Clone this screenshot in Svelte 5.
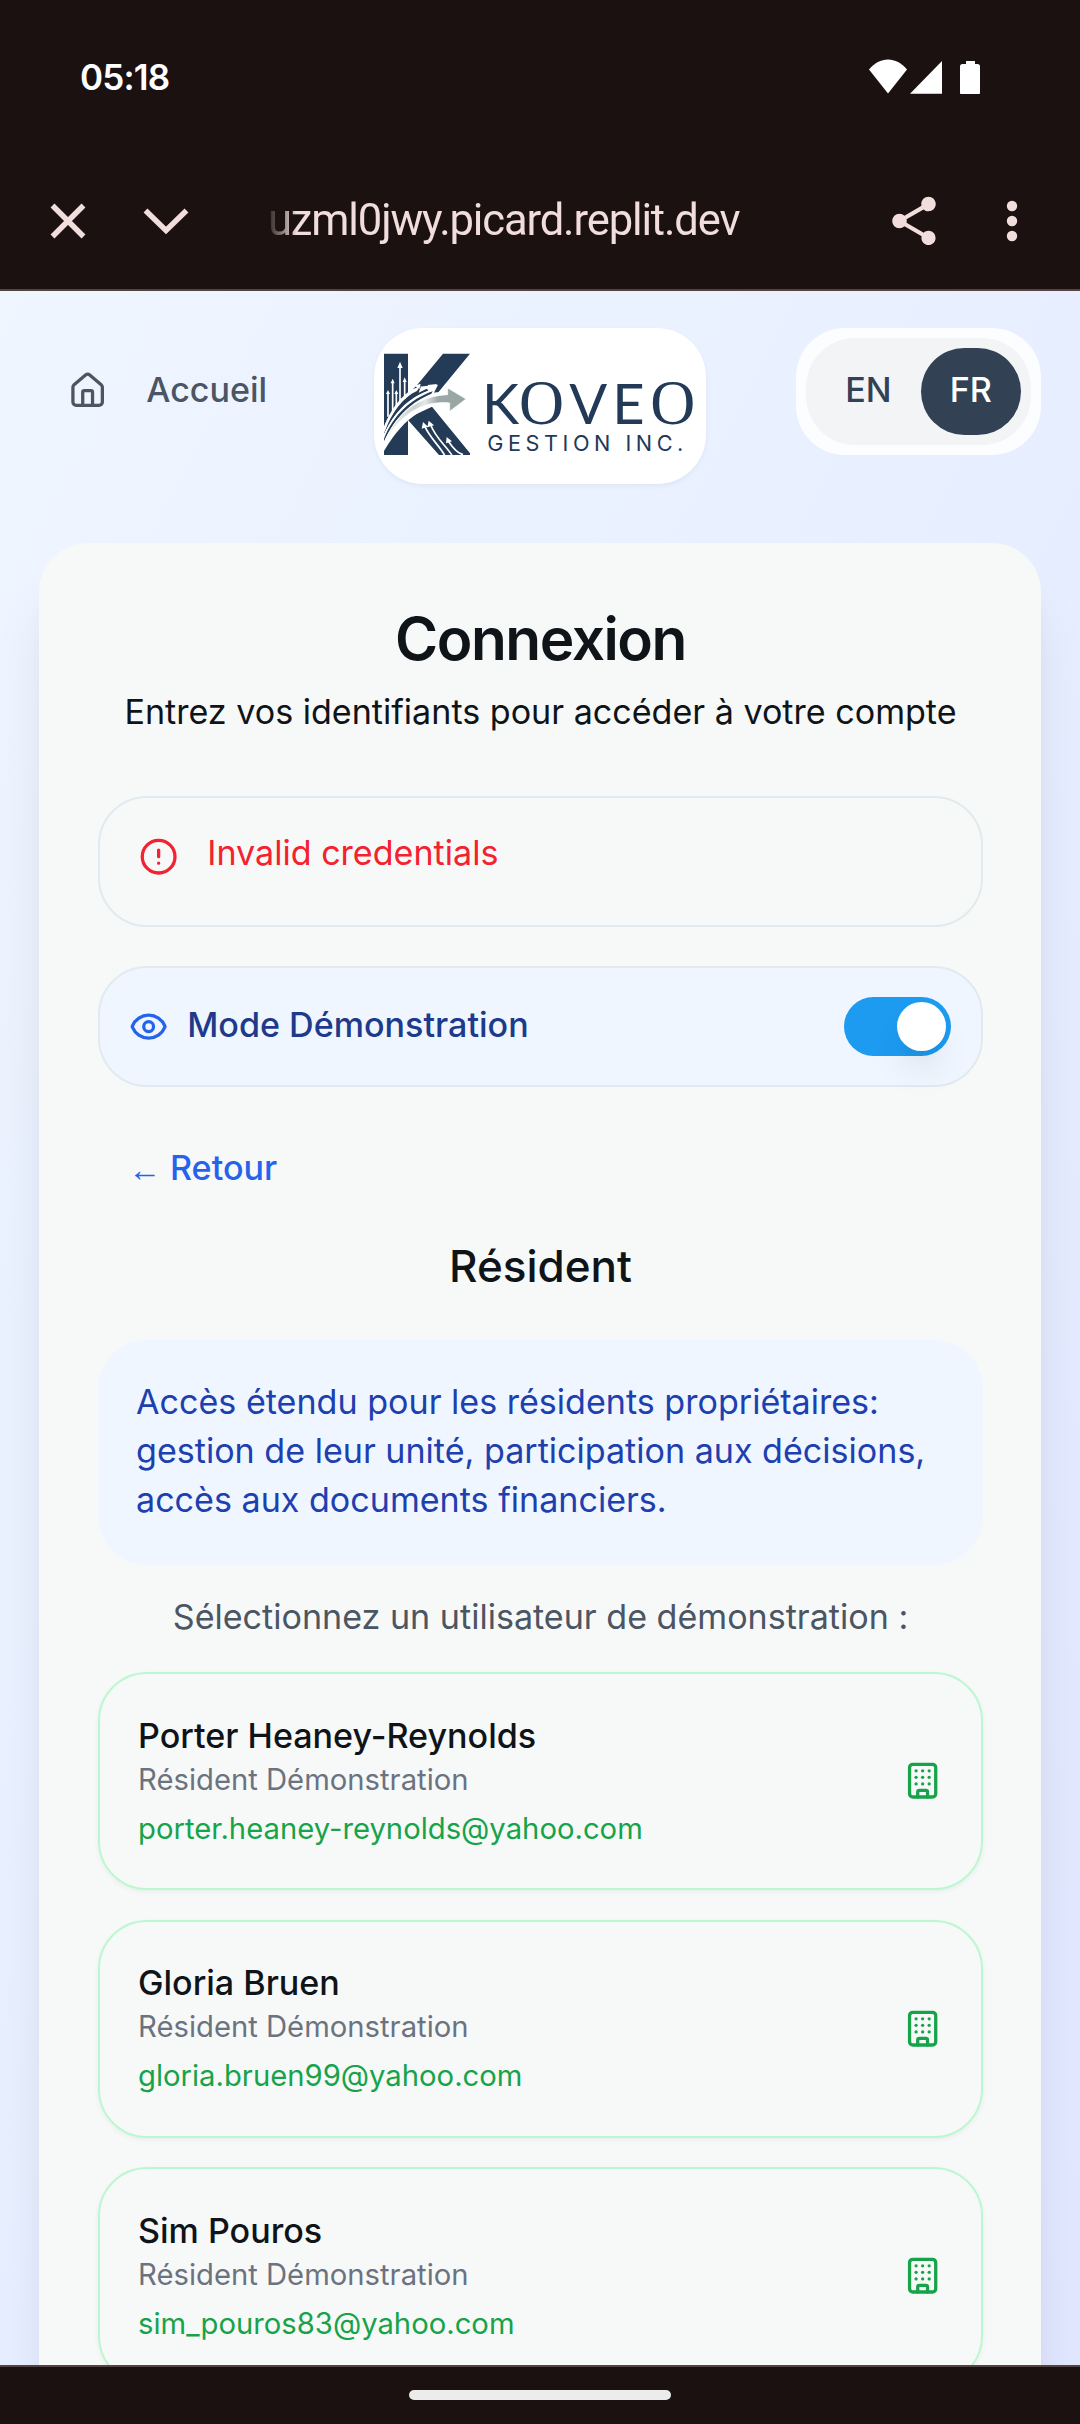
<script>
  const users = [
    { name: 'Porter Heaney-Reynolds', email: 'porter.heaney-reynolds@yahoo.com' },
    { name: 'Gloria Bruen', email: 'gloria.bruen99@yahoo.com' },
    { name: 'Sim Pouros', email: 'sim_pouros83@yahoo.com' }
  ];
  const windows = [6, 10, 14].flatMap((y) => [8, 12, 16].map((x) => ({ x, y })));
</script>

<div class="screen">
  <div class="chrome">
    <div class="status">
      <span class="time">05:18</span>
      <svg class="indicators" viewBox="868 58 114 37" width="114" height="37">
        <path d="M869 70.5C879.5 57 896.500 57 907 70.500L888 94.400Z" />
        <path d="M910 94.700H942V62Z" />
        <path d="M966 62h9v3h2.500a2.500 2.500 0 0 1 2.500 2.500V93.500a2.500 2.500 0 0 1-2.500 2.500h-15a2.500 2.500 0 0 1-2.500-2.500V67.500a2.500 2.500 0 0 1 2.500-2.500h3.500z" />
      </svg>
    </div>
    <div class="toolbar">
      <svg class="close" viewBox="0 0 36 36" width="36" height="36"><path d="M2.500 2.500l31 31M33.500 2.500l-31 31" /></svg>
      <svg class="chev" viewBox="0 0 46 28" width="46" height="28"><path d="M2.500 3.500L23 23.500L43.500 3.500" /></svg>
      <div class="url"><span>uzml0jwy.picard.replit.dev</span></div>
      <svg class="share" viewBox="0 0 24 24" width="58" height="58">
        <path d="M18 16.080c-.76 0-1.440.3-1.960.77L8.910 12.700c.05-.23.09-.46.09-.7s-.04-.47-.09-.7l7.050-4.110c.54.5 1.250.81 2.040.81 1.660 0 3-1.340 3-3s-1.340-3-3-3-3 1.340-3 3c0 .24.04.47.09.7L8.040 9.810C7.500 9.310 6.790 9 6 9c-1.660 0-3 1.340-3 3s1.340 3 3 3c.79 0 1.500-.31 2.040-.81l7.120 4.160c-.05.21-.08.43-.08.65 0 1.610 1.310 2.920 2.920 2.920s2.920-1.310 2.920-2.920-1.310-2.920-2.920-2.920z" />
      </svg>
      <svg class="more" viewBox="0 0 12 42" width="12" height="42">
        <circle cx="6" cy="6" r="5.200" /><circle cx="6" cy="21" r="5.200" /><circle cx="6" cy="36" r="5.200" />
      </svg>
    </div>
  </div>

  <main class="page">
    <header>
      <a class="home" href="#home">
        <svg class="icon" viewBox="0 0 24 24">
          <path d="M15 21v-8a1 1 0 0 0-1-1h-4a1 1 0 0 0-1 1v8" />
          <path d="M3 10a2 2 0 0 1 .709-1.528l7-5.999a2 2 0 0 1 2.582 0l7 5.999A2 2 0 0 1 21 10v9a2 2 0 0 1-2 2H5a2 2 0 0 1-2-2z" />
        </svg>
        <span>Accueil</span>
      </a>

      <div class="logo">
        <svg viewBox="42 54 996 468" width="332" height="156">
          <defs>
            <linearGradient id="silver" x1="0" x2="1" y1="0" y2="0">
              <stop offset="0" stop-color="#f1f5f4" />
              <stop offset=".38" stop-color="#c9d3d1" />
              <stop offset=".5" stop-color="#e4e9e8" />
              <stop offset=".66" stop-color="#9aa8a6" />
              <stop offset="1" stop-color="#97a5a3" />
            </linearGradient>
            <clipPath id="mark"><rect x="18" y="20" width="262" height="307" /></clipPath>
          </defs>
          <g transform="translate(54 108)" clip-path="url(#mark)">
            <path class="navy" d="M18 23H90V327H18Z" />
            <path class="navy" d="M195 23H276L170 152L118 160L90 145L118 116Z" />
            <path class="navy" d="M85 218L162 182L276 322V327H183L90 222Z" />
            <path class="white" d="M14 252C35 195 70 140 122 122L180 116L168 140C190 136 205 142 216 148L214 170C150 176 80 205 14 322Z" />
            <path class="navy" d="M18 262C35 205 70 155 118 134L122 118L128 124L122 140L146 128L152 134C100 152 50 190 18 268Z" />
            <path class="navy" d="M18 278C45 210 95 160 164 136L160 143C105 166 55 206 18 286Z" />
            <path class="hair" d="M18 256C38 202 70 155 120 128M18 268C45 206 90 160 158 132" />
            <path class="silver" d="M18 292C55 200 120 150 209 146V126L264 159L215 196V171C135 162 65 205 18 292Z" />
            <path class="stroke" d="M30 212V142M44 195V108M55 180V142M66 172V60M80 158V104" />
            <path class="white" d="M24 144L30 132L36 144ZM38 112L44 98L50 112ZM49 144L55 132L61 144ZM58 66L66 47L74 66ZM74 108L80 94L86 108ZM110 119L128 113L124 130ZM149 117L177 114L158 138Z" />
            <path class="stroke" d="M139 238C155 275 185 300 200 328M158 236C172 275 205 300 222 328M210 284C224 305 240 322 255 326" />
            <path class="white" d="M131 248L135 228L150 242ZM148 244L152 224L168 238ZM204 292L206 273L222 286Z" />
          </g>
          <text class="brand" x="366 477 628 757 871" y="342">K<tspan class="round">O</tspan>VE<tspan class="round">O</tspan></text>
          <text class="tagline" x="382" y="423" textLength="588" lengthAdjust="spacing">GESTION INC.</text>
        </svg>
      </div>

      <div class="lang">
        <div class="options">
          <button>EN</button>
          <button class="active">FR</button>
        </div>
      </div>
    </header>

    <section class="card">
      <h1>Connexion</h1>
      <p class="subtitle">Entrez vos identifiants pour accéder à votre compte</p>

      <div class="alert">
        <svg class="icon" viewBox="0 0 24 24"><circle cx="12" cy="12" r="10" /><path d="M12 8v4M12 16h.01" /></svg>
        <span>Invalid credentials</span>
      </div>

      <div class="mode">
        <svg class="icon" viewBox="0 0 24 24">
          <path d="M2.062 12.348a1 1 0 0 1 0-.696 10.750 10.750 0 0 1 19.876 0 1 1 0 0 1 0 .696 10.750 10.750 0 0 1-19.876 0" />
          <circle cx="12" cy="12" r="3" />
        </svg>
        <span>Mode Démonstration</span>
        <div class="switch"><div class="knob"></div></div>
      </div>

      <button class="back"><span class="arrow">←</span><span>Retour</span></button>

      <h2>Résident</h2>
      <p class="info">Accès étendu pour les résidents propriétaires: gestion de leur unité, participation aux décisions, accès aux documents financiers.</p>
      <p class="prompt">Sélectionnez un utilisateur de démonstration :</p>

      <div class="users">
        {#each users as user}
          <div class="user">
            <div class="details">
              <div class="name">{user.name}</div>
              <div class="role">Résident Démonstration</div>
              <div class="email">{user.email}</div>
            </div>
            <svg class="icon" viewBox="0 0 24 24">
              <rect x="4" y="2" width="16" height="20" rx="2" />
              <path d="M9 22v-3a1 1 0 0 1 1-1h4a1 1 0 0 1 1 1v3" />
              {#each windows as w}<path d="M{w.x} {w.y}h.01" />{/each}
            </svg>
          </div>
        {/each}
      </div>
    </section>
  </main>

  <footer><div class="handle"></div></footer>
</div>

<style>
  :global(body) { margin: 0; }
  .screen, .screen * { box-sizing: border-box; }
  .screen {
    width: 1080px; height: 2424px; display: flex; flex-direction: column; overflow: hidden;
    font-family: Inter, "Liberation Sans", sans-serif; font-size: 34.1px; line-height: 49px; color: #0f1419;
  }
  svg { display: block; flex: none; }
  h1, h2, p { margin: 0; }
  button { font: inherit; border: 0; background: none; padding: 0; }

  .chrome { height: 291px; flex: none; background: #1b1110; border-bottom: 2px solid #534342; }
  .status { height: 152px; padding: 0 98px 0 80px; display: flex; justify-content: space-between; align-items: center; }
  .time { color: #fff; font-size: 35px; font-weight: 600; line-height: 40px; letter-spacing: -0.8px; margin-top: 2px; }
  .indicators { fill: #fff; margin-top: -2px; }
  .toolbar { height: 137px; padding-left: 50px; display: flex; align-items: center; color: #f1dedc; }
  .close, .chev { fill: none; stroke: currentColor; stroke-width: 5.5; }
  .chev { margin-left: 57px; }
  .url {
    width: 480px; margin-left: 76px; padding-left: 3px; font-family: Roboto, sans-serif; font-size: 43.5px; line-height: 60px; white-space: nowrap;
    mask-image: linear-gradient(to right, transparent 0, #000 32px);
  }
  .url span { letter-spacing: -1.12px; }
  .share { margin-left: 140px; fill: currentColor; }
  .more { margin-left: 63px; fill: currentColor; }

  .page { flex: 1; min-height: 0; overflow: hidden; padding: 37px 39px 0; background: linear-gradient(to bottom right, #eff6ff, #e0e7ff); }
  header { display: grid; grid-template-columns: 1fr auto 1fr; align-items: start; height: 215px; }
  .icon { width: 39.27px; height: 39.27px; fill: none; stroke: currentColor; stroke-width: 2; stroke-linecap: round; stroke-linejoin: round; }
  .home { display: flex; align-items: center; gap: 39px; margin-top: 37px; padding-left: 29px; color: #4b5563; font-weight: 500; text-decoration: none; }
  .home .icon { margin-top: 2px; }
  .logo { width: 332px; height: 156px; border-radius: 49px; background: #fff; overflow: hidden; box-shadow: 0 2px 5px rgba(0, 0, 0, .05); }
  .navy { fill: #243b57; }
  .white { fill: #fff; }
  .silver { fill: url(#silver); stroke: #fff; stroke-width: 2; }
  .hair { fill: none; stroke: #fff; stroke-width: 4; }
  .stroke { fill: none; stroke: #fff; stroke-width: 5; }
  .brand { font-family: Lato, sans-serif; font-size: 168px; fill: #223a57; }
  .round { font-family: "Liberation Serif", serif; font-size: 187px; }
  .tagline { font-size: 65px; font-weight: 400; fill: #223a57; }
  .lang { justify-self: end; width: 245px; height: 127px; padding: 10px; border-radius: 49px; background: rgba(255, 255, 255, .85); }
  .options { display: flex; height: 107px; padding: 10px; border-radius: 49px; background: #f3f4f6; }
  .options button { width: 105.500px; height: 87px; padding-bottom: 4px; border-radius: 49px; font-weight: 500; color: #334155; }
  .options .active { width: 101px; background: #334155; color: #fff; }

  .card {
    height: 2200px; padding: 61px 58px 0 59px; border-radius: 49px; background: #f7f9f8;
    box-shadow: 0 49px 61px -12px rgba(0, 0, 0, .1), 0 20px 25px -15px rgba(0, 0, 0, .1);
  }
  h1 { font-size: 58.6px; font-weight: 600; line-height: 70px; letter-spacing: -1.47px; text-align: center; }
  .subtitle { margin-top: 13px; text-align: center; }
  .alert { height: 131px; margin-top: 60px; padding: 30px 39px; display: flex; align-items: flex-start; gap: 29px; border: 2px solid #e1eaef; border-radius: 49px; color: #f4212e; }
  .alert .icon { margin-top: 9px; }
  .mode { height: 121px; margin-top: 39px; padding: 0 30px 0 29px; display: flex; align-items: center; gap: 19px; border: 2px solid #e1eaef; border-radius: 49px; background: #eff6ff; color: #1e3a8a; font-weight: 500; }
  .mode .icon { color: #2563eb; }
  .mode span { margin-top: -4px; }
  .switch { width: 107px; height: 59px; margin-left: auto; padding: 5px; display: flex; justify-content: flex-end; border-radius: 30px; background: #1d9bf0; }
  .knob { width: 49px; height: 49px; border-radius: 50%; background: #fff; box-shadow: 0 25px 37px -7px rgba(0, 0, 0, .1), 0 10px 15px -10px rgba(0, 0, 0, .1); }
  .back { display: flex; margin-top: 56px; padding-left: 30px; color: #2563eb; font-weight: 500; line-height: 49px; }
  .arrow { width: 42px; font-family: "Liberation Sans", sans-serif; font-size: 33px; font-weight: 400; text-align: left; line-height: 54px; height: 49px; }
  h2 { margin-top: 44px; font-size: 44px; font-weight: 500; line-height: 60px; text-align: center; }
  .info { height: 225px; margin-top: 44px; padding: 37px 38px; border-radius: 49px; background: #eff6ff; color: #1e40af; }
  .prompt { margin-top: 27px; text-align: center; color: #4b5563; }
  .users { display: flex; flex-direction: column; gap: 29.5px; margin-top: 31px; }
  .user { height: 218px; padding: 0 39px 0 38px; display: flex; justify-content: space-between; align-items: center; border: 2px solid #bbf7d0; border-radius: 49px; box-shadow: 0 2px 5px rgba(0, 0, 0, .05); }
  .user .icon { color: #16a34a; }
  .details { padding-bottom: 4px; }
  .name { font-weight: 500; }
  .role, .email { font-size: 29.25px; line-height: 39px; }
  .role { color: #6b7280; }
  .email { margin-top: 10px; color: #16a34a; }

  footer { height: 59px; flex: none; display: flex; justify-content: center; align-items: flex-start; padding-top: 23px; background: #1b1110; border-top: 2px solid #534342; }
  .handle { width: 262px; height: 10px; border-radius: 5px; background: #ececec; }
</style>
